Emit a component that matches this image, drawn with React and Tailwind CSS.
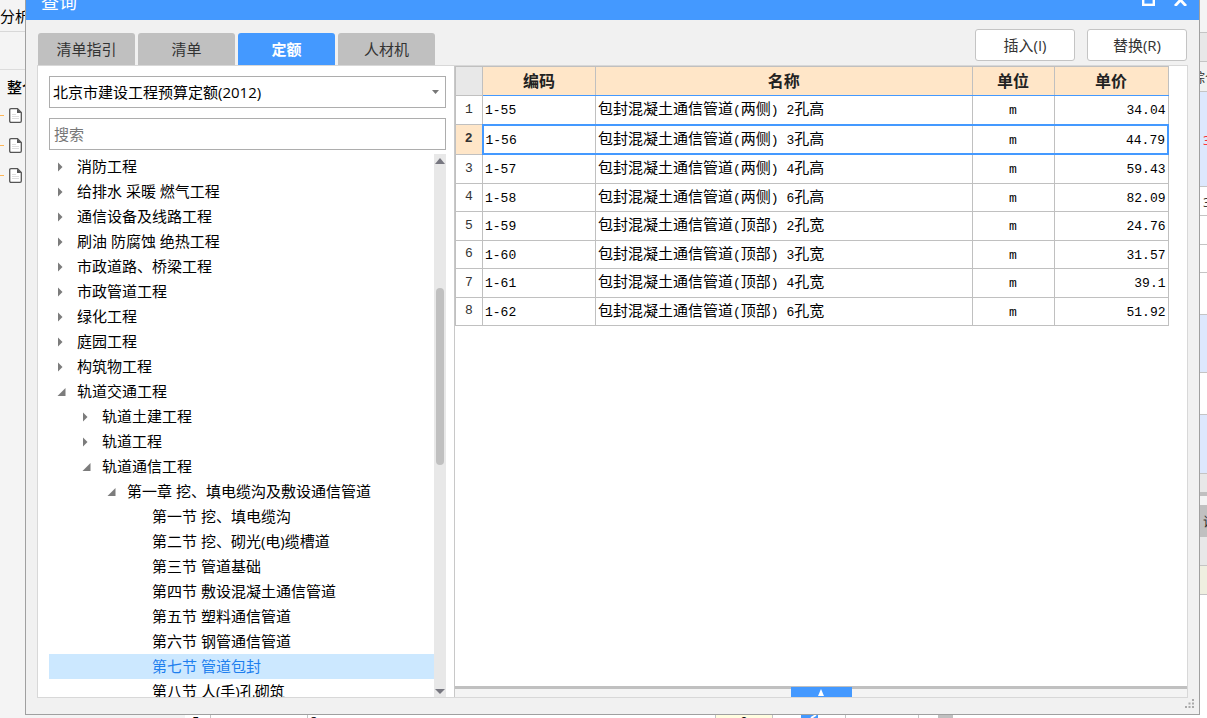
import React, { useState } from "react";

const tabs = ["清单指引", "清单", "定额", "人材机"];

const treeItems = [
  { label: "消防工程", level: 0, state: "closed" },
  { label: "给排水 采暖 燃气工程", level: 0, state: "closed" },
  { label: "通信设备及线路工程", level: 0, state: "closed" },
  { label: "刷油 防腐蚀 绝热工程", level: 0, state: "closed" },
  { label: "市政道路、桥梁工程", level: 0, state: "closed" },
  { label: "市政管道工程", level: 0, state: "closed" },
  { label: "绿化工程", level: 0, state: "closed" },
  { label: "庭园工程", level: 0, state: "closed" },
  { label: "构筑物工程", level: 0, state: "closed" },
  { label: "轨道交通工程", level: 0, state: "open" },
  { label: "轨道土建工程", level: 1, state: "closed" },
  { label: "轨道工程", level: 1, state: "closed" },
  { label: "轨道通信工程", level: 1, state: "open" },
  { label: "第一章 挖、填电缆沟及敷设通信管道", level: 2, state: "open" },
  { label: "第一节 挖、填电缆沟", level: 3 },
  { label: "第二节 挖、砌光(电)缆槽道", level: 3 },
  { label: "第三节 管道基础", level: 3 },
  { label: "第四节 敷设混凝土通信管道", level: 3 },
  { label: "第五节 塑料通信管道", level: 3 },
  { label: "第六节 钢管通信管道", level: 3 },
  { label: "第七节 管道包封", level: 3 },
  { label: "第八节 人(手)孔砌筑", level: 3 },
];

const rows = [
  { code: "1-55", name: "包封混凝土通信管道(两侧) 2孔高", unit: "m", price: "34.04" },
  { code: "1-56", name: "包封混凝土通信管道(两侧) 3孔高", unit: "m", price: "44.79" },
  { code: "1-57", name: "包封混凝土通信管道(两侧) 4孔高", unit: "m", price: "59.43" },
  { code: "1-58", name: "包封混凝土通信管道(两侧) 6孔高", unit: "m", price: "82.09" },
  { code: "1-59", name: "包封混凝土通信管道(顶部) 2孔宽", unit: "m", price: "24.76" },
  { code: "1-60", name: "包封混凝土通信管道(顶部) 3孔宽", unit: "m", price: "31.57" },
  { code: "1-61", name: "包封混凝土通信管道(顶部) 4孔宽", unit: "m", price: "39.1" },
  { code: "1-62", name: "包封混凝土通信管道(顶部) 6孔宽", unit: "m", price: "51.92" },
];

const indents = ["pl-2", "pl-[33px]", "pl-[58px]", "pl-[83px]"];

// Latin runs are set in a narrower monospace than the Chinese around them
const GridText = ({ text }) =>
  text.split(/([\x20-\x7e]+)/).map((part, idx) =>
    idx % 2 ? (
      <span key={idx} className="whitespace-pre text-[13px] font-['Liberation_Mono',monospace]">{part}</span>
    ) : (
      part
    )
  );

const Arrow = ({ state }) => (
  <svg className="w-[20px] h-[10px] shrink-0" viewBox="0 0 20 10" fill="#7c7c7c" aria-hidden="true">
    {state === "closed" && <path d="M1 0.5 L5.5 5 L1 9.5Z" />}
    {state === "open" && <path d="M8.5 1 V9 H0.5Z" />}
  </svg>
);

const FileIcon = () => (
  <div className="flex items-center h-[30px]">
    <span className="w-1 h-px bg-[#ffb655] mr-[5px]" />
    <svg width="13" height="15" viewBox="0 0 13 15" fill="none" aria-hidden="true">
      <path d="M2 0.7 H8.5 L12.3 4.5 V13 Q12.3 14.3 11 14.3 H2 Q0.7 14.3 0.7 13 V2 Q0.7 0.7 2 0.7Z" fill="#fff" stroke="#555" strokeWidth="1.3" />
      <path d="M8 0.7 V5 H12.3Z" fill="#555" />
      <path d="M3 6.5 H7 M3 8.5 H10 M3 10.5 H10" stroke="#ddd" />
    </svg>
  </div>
);

const LeftStrip = () => (
  <div className="w-[25px] shrink-0 overflow-hidden whitespace-nowrap bg-[#f4f4f4] text-[15px]">
    <div className="h-8 border-b border-[#d8d8d8] leading-[32px]">分析</div>
    <div className="h-[38px] border-b border-[#dcdcdc]" />
    <div className="h-[30px] pl-[7px] leading-[34px] font-medium">整个</div>
    <FileIcon />
    <FileIcon />
    <FileIcon />
  </div>
);

const RightStrip = () => (
  <div className="w-[7px] shrink-0 overflow-hidden whitespace-nowrap bg-white text-[13px] text-[#333]">
    <div className="h-[33px] bg-[#f4f4f4] border-b border-[#c4c4c4]" />
    <div className="h-[29px] bg-[#e8e8e8] border-b border-[#c4c4c4]" />
    <div className="h-[30px] bg-[#f1f1f1] border-b border-[#c4c4c4] leading-[30px]"><span className="-ml-2">综合</span></div>
    <div className="h-[95px] bg-[#dde8fd] border-b border-[#c4c4c4] leading-[96px] pl-[3px] text-red-500">3</div>
    <div className="h-[29px] border-b border-[#c4c4c4] leading-[30px] pl-[3px]">3</div>
    <div className="h-[29px] border-b border-[#c4c4c4]" />
    <div className="h-[28px] border-b border-[#c4c4c4]" />
    <div className="h-[42px] border-b border-[#c4c4c4]" />
    <div className="h-[58px] bg-[#dde8fd] border-b border-[#c4c4c4]" />
    <div className="h-[42px] border-b border-[#c4c4c4]" />
    <div className="h-[59px] bg-[#dde8fd] border-b border-[#c4c4c4]" />
    <div className="h-[22px] bg-[#e8e8e8] border-b-4 border-[#c0c0c0]" />
    <div className="h-[9px] bg-[#f4f4f4]" />
    <div className="h-8 bg-[#c0c0c0] leading-[32px] pl-[3px]">说</div>
    <div className="h-[29px] bg-[#e8e8e8] border-b border-[#c4c4c4]" />
    <div className="h-[29px] bg-[#efefe0] border-b border-[#c4c4c4]" />
  </div>
);

const BottomStrip = () => (
  <div className="flex h-[3px] shrink-0 overflow-hidden bg-white text-[13px] leading-[12px]">
    <div className="w-[185px] bg-[#f4f4f4]" />
    <div className="w-[26px] border-r border-[#c4c4c4] pl-[7px]">5</div>
    <div className="w-[97px] border-r border-[#c4c4c4]" />
    <div className="w-[408px] border-r border-[#c4c4c4] pl-[2px]">8</div>
    <div className="w-[57px] border-r border-[#c4c4c4] bg-[#fffde0] text-center">0</div>
    <div className="w-[73px] border-r border-[#c4c4c4] flex justify-center">
      <svg width="17" height="3" viewBox="0 0 17 3" aria-hidden="true">
        <rect width="17" height="3" fill="#4499ff" />
        <path d="M10 3 L15 0" stroke="#fff" strokeWidth="2" />
      </svg>
    </div>
    <div className="w-[73px] border-r border-[#c4c4c4]" />
    <div className="w-[15px] ml-[19px] bg-[#c0c0c0]" />
  </div>
);

const TitleBar = () => (
  <header className="flex items-end h-5 shrink-0 overflow-hidden bg-[#4499ff] text-white">
    <h1 className="flex-1 pl-[15px] text-[18px] leading-[36px]">查询</h1>
    <button aria-label="最大化" className="mb-[14px] mr-[19px]">
      <svg width="13" height="12" viewBox="0 0 13 12" fill="none" stroke="currentColor" strokeWidth="2.4">
        <rect x="1.2" y="1.2" width="10.6" height="9.6" />
      </svg>
    </button>
    <button aria-label="关闭" className="mb-[14px] mr-3">
      <svg width="13" height="12" viewBox="0 0 13 12" fill="none" stroke="currentColor" strokeWidth="2.8">
        <path d="M1 0 L12 12 M12 0 L1 12" />
      </svg>
    </button>
  </header>
);

const App = () => {
  const [activeTab, setActiveTab] = useState("定额");
  const [selectedNode, setSelectedNode] = useState("第七节 管道包封");
  const [selectedRow, setSelectedRow] = useState(1);

  return (
    <div className="flex flex-col h-screen overflow-hidden bg-white text-black font-['Open_Sans','Noto_Sans_CJK_SC',sans-serif]">
      <div className="flex flex-1 min-h-0">
        <LeftStrip />

        {/* Query dialog */}
        <section className="relative flex flex-col flex-1 min-w-0 bg-[#f1f1f1] border-x border-b border-[#a0a0a0]">
          <TitleBar />

          {/* Tabs + actions */}
          <div className="flex justify-between h-[45px] shrink-0 px-3">
            <div className="flex gap-[3px] items-end" role="tablist">
              {tabs.map((tab) => (
                <button
                  key={tab}
                  role="tab"
                  aria-selected={tab === activeTab}
                  onClick={() => setActiveTab(tab)}
                  className={`w-[97px] h-8 rounded-t-[3px] text-[15px] ${tab === activeTab ? "bg-[#4499ff] text-white font-bold" : "bg-[#c0c0c0] text-[#333]"}`}
                >
                  {tab}
                </button>
              ))}
            </div>
            <div className="flex gap-3 pt-[9px]">
              <button className="w-[100px] h-8 bg-white border border-[#c4c4c4] rounded-[3px] text-[15px] leading-5 text-[#333]">插入(I)</button>
              <button className="w-[100px] h-8 bg-white border border-[#c4c4c4] rounded-[3px] text-[15px] leading-5 text-[#333]">替换(R)</button>
            </div>
          </div>

          <div className="flex flex-1 min-h-0 mx-[11px] mb-4 bg-white border border-[#d8d8d8]">
            {/* Left: quota library tree */}
            <div className="flex flex-col w-[417px] shrink-0 pl-[11px] pr-2 pt-[10px] border-r border-[#c8c8c8]">
              <div className="relative mb-[10px]">
                <select aria-label="定额库" className="block w-full h-8 appearance-none bg-white border border-[#adadad] pl-[3px] text-[15px]">
                  <option>北京市建设工程预算定额(2012)</option>
                </select>
                <svg className="absolute right-[7px] top-[14px] pointer-events-none" width="7" height="4" viewBox="0 0 7 4" fill="#777" aria-hidden="true">
                  <path d="M0 0 H7 L3.5 4Z" />
                </svg>
              </div>
              <input aria-label="搜索" placeholder="搜索" className="h-8 shrink-0 border border-[#adadad] px-1 text-[15px] placeholder:text-[#777]" />

              <div className="flex flex-1 min-h-0 mt-1">
                <ul className="flex-1 min-w-0 overflow-hidden">
                  {treeItems.map((item) => (
                    <li key={item.label}>
                      <button
                        onClick={() => setSelectedNode(item.label)}
                        className={`flex items-center w-full h-[25px] text-[15px] leading-[25px] whitespace-nowrap ${indents[item.level]} ${item.label === selectedNode ? "bg-[#cce8ff] text-[#1e7fee]" : ""}`}
                      >
                        <Arrow state={item.state} />
                        {item.label}
                      </button>
                    </li>
                  ))}
                </ul>
                {/* Scrollbar */}
                <div className="flex flex-col items-center w-3 bg-[#e8e8e8]">
                  <svg className="mt-1 shrink-0" width="10" height="6" viewBox="0 0 10 6" fill="#777780" aria-hidden="true"><path d="M5 0 L10 6 H0Z" /></svg>
                  <div className="w-2 h-[177px] mt-[124px] rounded-full bg-[#c0c0c0]" />
                  <svg className="mt-auto mb-[3px] shrink-0" width="10" height="5" viewBox="0 0 10 5" fill="#777780" aria-hidden="true"><path d="M0 0 H10 L5 5Z" /></svg>
                </div>
              </div>
            </div>

            {/* Right: quota list */}
            <div className="flex flex-col flex-1 min-w-0">
              <div className="flex-1 min-h-0 pr-[18px] overflow-hidden">
                <table className="w-full h-[260px] table-fixed border-collapse text-[15px] leading-5">
                  <colgroup>
                    <col className="w-[27px]" />
                    <col className="w-[113px]" />
                    <col />
                    <col className="w-[82px]" />
                    <col className="w-[114px]" />
                  </colgroup>
                  <thead>
                    <tr className="h-[29px] bg-[#ffe6c8] text-[16px] text-[#222]">
                      <td className="bg-[#e8e8e8] border border-[#c0c0c0]" />
                      {["编码", "名称", "单位", "单价"].map((title) => (
                        <th key={title} className="p-0 border border-[#c0c0c0] border-b-[#4499ff] font-bold">{title}</th>
                      ))}
                    </tr>
                  </thead>
                  <tbody>
                    {rows.map((row, idx) => (
                      <tr
                        key={row.code}
                        onClick={() => setSelectedRow(idx)}
                      >
                        <th scope="row" className={`p-0 border border-[#c0c0c0] text-[13px] text-[#333] font-['Liberation_Mono',monospace] ${idx === selectedRow ? "bg-[#ffe6c8] font-bold" : "font-normal"}`}>
                          {idx + 1}
                        </th>
                        <td className={`p-0 pl-[2px] border border-[#c0c0c0] ${idx === selectedRow ? "border-y-2 border-l-2 border-y-[#4499ff] border-l-[#4499ff]" : ""}`}><GridText text={row.code} /></td>
                        <td className={`p-0 pl-[2px] border border-[#c0c0c0] whitespace-nowrap ${idx === selectedRow ? "border-y-2 border-y-[#4499ff]" : ""}`}><GridText text={row.name} /></td>
                        <td className={`p-0 border border-[#c0c0c0] text-center ${idx === selectedRow ? "border-y-2 border-y-[#4499ff]" : ""}`}><GridText text={row.unit} /></td>
                        <td className={`p-0 pr-[2px] border border-[#c0c0c0] text-right ${idx === selectedRow ? "border-y-2 border-r-2 border-y-[#4499ff] border-r-[#4499ff]" : ""}`}><GridText text={row.price} /></td>
                      </tr>
                    ))}
                  </tbody>
                </table>
              </div>

              {/* Collapsed detail pane */}
              <div className="flex justify-center h-[11px] shrink-0 bg-[#f4f4f4] border-t-[3px] border-[#c0c0c0]">
                <button aria-label="展开" className="flex items-center justify-center w-[61px] h-[10px] -mt-[2px] bg-[#4499ff]">
                  <svg width="6" height="7" viewBox="0 0 6 7" fill="#fff"><path d="M3 0 L6 7 H0Z" /></svg>
                </button>
              </div>
            </div>
          </div>

          {/* Resize grip */}
          <svg className="absolute right-1 bottom-[5px]" width="10" height="10" viewBox="0 0 10 10" fill="#aaa" aria-hidden="true">
            <path d="M7 0h2v2h-2z M3.5 3.5h2v2h-2z M7 3.5h2v2h-2z M0 7h2v2h-2z M3.5 7h2v2h-2z M7 7h2v2h-2z" />
          </svg>
        </section>

        <RightStrip />
      </div>
      <BottomStrip />
    </div>
  );
};

export default App;
